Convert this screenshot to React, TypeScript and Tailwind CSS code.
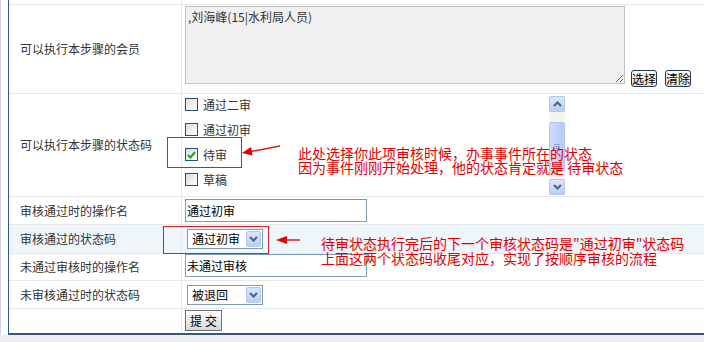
import type { ReactNode } from 'react';

const FONT = "font-['Noto_Sans_CJK_SC','Liberation_Sans',sans-serif]";

interface RowProps {
  label?: string;
  className: string;
  children?: ReactNode;
}

function Row({ label, className, children }: RowProps) {
  return (
    <div className={`flex shrink-0 ${className}`}>
      <div className="w-[173px] shrink-0 border-r border-[#e6e8eb] pl-[11px] flex items-center text-[#333]">
        {label}
      </div>
      <div className="flex-1 pl-[3px]">{children}</div>
    </div>
  );
}

function Chevron({ up = false }: { up?: boolean }) {
  return (
    <svg width="9" height="6" viewBox="0 0 9 6">
      <polyline
        points={up ? '1,5 4.5,1.5 8,5' : '1,1 4.5,4.5 8,1'}
        fill="none"
        stroke="#4d6185"
        strokeWidth="2"
      />
    </svg>
  );
}

function Checkbox({ label, checked = false }: { label: string; checked?: boolean }) {
  return (
    <div className="flex items-center h-[13px]">
      <span className="w-[13px] h-[13px] border border-[#1c5180] bg-gradient-to-br from-[#dcdcd7] to-white flex items-center justify-center">
        {checked && (
          <svg width="9" height="8" viewBox="0 0 9 8">
            <polyline points="1,4 3.5,6.5 8,1" fill="none" stroke="#21a121" strokeWidth="2" />
          </svg>
        )}
      </span>
      <span className="ml-[5px] text-[#333] leading-none">{label}</span>
    </div>
  );
}

function ScrollBar() {
  return (
    <div className="w-[16px] h-[99px] mt-[2px] flex flex-col bg-[#f4f3ee]">
      <div className="h-[16px] shrink-0 rounded-[2px] border border-[#b4c6ee] bg-gradient-to-b from-[#dbe6fd] to-[#b9cdf6] flex items-center justify-center">
        <Chevron up />
      </div>
      <div className="h-[10px] shrink-0" />
      <div className="h-[50px] shrink-0 rounded-[2px] border border-[#b4c6ee] bg-gradient-to-r from-[#cddbfc] to-[#b7cbf5] flex flex-col items-center justify-center gap-[1px]">
        <span className="w-[6px] h-px bg-[#8ea6da]" />
        <span className="w-[6px] h-px bg-[#8ea6da]" />
        <span className="w-[6px] h-px bg-[#8ea6da]" />
        <span className="w-[6px] h-px bg-[#8ea6da]" />
      </div>
      <div className="flex-1" />
      <div className="h-[16px] shrink-0 rounded-[2px] border border-[#b4c6ee] bg-gradient-to-b from-[#dbe6fd] to-[#b9cdf6] flex items-center justify-center">
        <Chevron />
      </div>
    </div>
  );
}

function FakeSelect({ value }: { value: string }) {
  return (
    <div className="ml-[2px] w-[76px] h-[20px] border border-[#7f9db9] bg-white flex items-center">
      <span className="flex-1 pl-[4px] text-black leading-none">{value}</span>
      <span className="w-[15px] h-[16px] mr-[1px] rounded-[2px] border border-[#b4c6ee] bg-gradient-to-b from-[#dbe6fd] to-[#b9cdf6] flex items-center justify-center">
        <Chevron />
      </span>
    </div>
  );
}

function SmallButton({ children }: { children: ReactNode }) {
  return (
    <button className="w-[26px] h-[17px] rounded-[3px] border border-[#1d3a5c] bg-gradient-to-b from-white to-[#e6e3d6] text-black text-[12px] leading-none flex items-center justify-center p-0">
      {children}
    </button>
  );
}

export default function App() {
  return (
    <div className={`w-[704px] h-[342px] bg-[#efefef] relative overflow-hidden text-[12px] ${FONT}`}>
      <div className="h-[335px] bg-white border-l border-[#cdd5df] pl-[7px]">
        <div className="h-full border-l border-b-2 border-[#36587f] flex flex-col">
          <Row className="h-[5px] border-b border-[#e6e8eb]" />

          <Row label="可以执行本步骤的会员" className="h-[89px] border-b border-[#e6e8eb]">
            <div className="flex items-start pt-[1px]">
              <textarea
                readOnly
                defaultValue=",刘海峰(15|水利局人员)"
                className="w-[440px] h-[78px] border border-[#c3c3c3] bg-[#f0f0f0] text-[#333] text-[12px] leading-[16px] px-[2px] py-[2px] outline-none"
              />
              <div className="flex mt-[64px] ml-[6px] gap-[8px]">
                <SmallButton>选择</SmallButton>
                <SmallButton>清除</SmallButton>
              </div>
            </div>
          </Row>

          <Row label="可以执行本步骤的状态码" className="h-[103px] border-b border-[#e6e8eb]">
            <div className="w-[380px] h-full flex">
              <div className="flex-1 flex flex-col gap-[12px] pt-[4px]">
                <Checkbox label="通过二审" />
                <Checkbox label="通过初审" />
                <Checkbox label="待审" checked />
                <Checkbox label="草稿" />
              </div>
              <ScrollBar />
            </div>
          </Row>

          <Row label="审核通过时的操作名" className="h-[28px] border-b border-[#e6e8eb]">
            <div className="mt-[2px] w-[182px] h-[23px] border border-[#7f9db9] bg-white flex items-center pl-[1px] text-black">
              通过初审
            </div>
          </Row>

          <Row label="审核通过的状态码" className="h-[29px] border-b border-[#e6e8eb] bg-[#eef5fb]">
            <div className="mt-[4px]">
              <FakeSelect value="通过初审" />
            </div>
          </Row>

          <Row label="未通过审核时的操作名" className="h-[27px] border-b border-[#e6e8eb]">
            <div className="w-[182px] h-[23px] border border-[#7f9db9] bg-white flex items-center pl-[1px] text-black">
              未通过审核
            </div>
          </Row>

          <Row label="未审核通过时的状态码" className="h-[28px] border-b border-[#e6e8eb]">
            <div className="mt-[4px]">
              <FakeSelect value="被退回" />
            </div>
          </Row>

          <Row className="flex-1">
            <button className="mt-[1px] w-[37px] h-[21px] border border-[#6f6f6f] bg-gradient-to-b from-[#fdfdfd] to-[#d8d8d8] text-black text-[12px] leading-none tracking-[3px] pl-[3px] p-0">
              提交
            </button>
          </Row>
        </div>
      </div>

      {/* annotation marks drawn over the form */}
      <div className="absolute left-[167px] top-[137px] w-[75px] h-[31px] border border-[#c62828]" />
      <div className="absolute left-[163px] top-[226px] w-[106px] h-[28px] border border-[#c62828]" />

      <svg className="absolute left-0 top-0 pointer-events-none" width="704" height="342">
        <line x1="280" y1="146" x2="251" y2="151.5" stroke="#d42020" strokeWidth="1.5" />
        <polygon points="242,153 252.5,155.5 251,147" fill="#e00000" />
        <line x1="300" y1="240" x2="285" y2="240" stroke="#d42020" strokeWidth="1.5" />
        <polygon points="276,240 287,236 287,244" fill="#e00000" />
      </svg>

      <div className="absolute left-[298px] top-[146px] text-[14px] leading-[14px] text-[#e00000] whitespace-nowrap">
        <div>此处选择你此项审核时候，办事事件所在的状态</div>
        <div>因为事件刚刚开始处理，他的状态肯定就是 待审状态</div>
      </div>
      <div className="absolute left-[321px] top-[236px] text-[14px] leading-[15px] text-[#e00000] whitespace-nowrap">
        <div>待审状态执行完后的下一个审核状态码是"通过初审"状态码</div>
        <div>上面这两个状态码收尾对应，实现了按顺序审核的流程</div>
      </div>
    </div>
  );
}
